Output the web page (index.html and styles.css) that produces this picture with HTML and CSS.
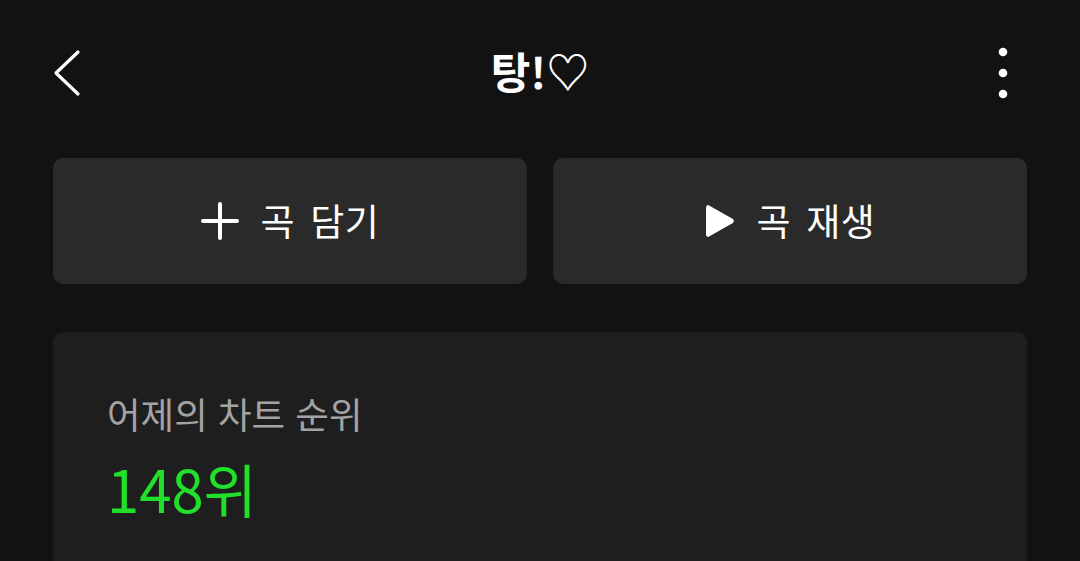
FILE: index.html
```html
<!DOCTYPE html>
<html lang="ko">
<head>
<meta charset="utf-8">
<title>탕!♡</title>
<link rel="stylesheet" href="styles.css">
</head>
<body>
<div class="screen">
  <header class="topbar">
    <button class="icon-btn back" aria-label="뒤로">
      <svg width="30" height="48" viewBox="0 0 30 48"><polyline points="25,3 3,24 25,45" fill="none" stroke="#fff" stroke-width="3.2" stroke-linecap="round" stroke-linejoin="round"/></svg>
    </button>
    <h1 class="title">탕!♡</h1>
    <button class="icon-btn more" aria-label="더보기">
      <svg width="12" height="54" viewBox="0 0 12 54"><circle cx="6" cy="6" r="4.3" fill="#fff"/><circle cx="6" cy="27" r="4.3" fill="#fff"/><circle cx="6" cy="48" r="4.3" fill="#fff"/></svg>
    </button>
  </header>

  <div class="actions">
    <button class="action">
      <svg class="action-icon" width="38" height="38" viewBox="0 0 38 38"><path d="M19 2v34M2 19h34" stroke="#fff" stroke-width="4" stroke-linecap="round"/></svg>
      <span>곡 담기</span>
    </button>
    <button class="action">
      <svg class="action-icon" width="30" height="36" viewBox="0 0 30 36"><path d="M4 3.5 Q2 2.3 2 4.8 V31.2 Q2 33.7 4 32.5 L27 19.4 Q28.6 18 27 16.6 Z" fill="#fff" stroke="#fff" stroke-width="2" stroke-linejoin="round"/></svg>
      <span>곡 재생</span>
    </button>
  </div>

  <section class="card">
    <p class="card-label">어제의 차트 순위</p>
    <p class="card-value">148위</p>
  </section>
</div>
</body>
</html>
```

FILE: styles.css
```css
html, body {
  margin: 0;
  padding: 0;
  background: #121212;
  overflow: hidden;
}

body {
  font-family: "Noto Sans CJK KR", "Noto Sans", Roboto, sans-serif;
  color: #fff;
}

.screen {
  width: 1080px;
  height: 561px;
  padding: 0 53px;
  box-sizing: border-box;
  overflow: hidden;
}

.topbar {
  height: 146px;
  display: flex;
  align-items: flex-start;
  justify-content: space-between;
  position: relative;
}

.icon-btn {
  background: none;
  border: 0;
  padding: 0;
  display: flex;
}

.back {
  margin-top: 49px;
}

.more {
  margin-top: 46px;
  margin-right: 18px;
}

.title {
  margin: 0;
  margin-top: 40px;
  font-size: 43px;
  font-weight: 700;
  line-height: 60px;
  letter-spacing: 0;
  position: absolute;
  left: 50%;
  transform: translateX(-50%);
}

.actions {
  margin-top: 12px;
  display: flex;
  gap: 26px;
}

.action {
  flex: 1;
  height: 126px;
  background: #2a2a2a;
  border: 0;
  border-radius: 10px;
  display: flex;
  align-items: center;
  justify-content: center;
  gap: 22px;
  color: #fff;
  font-family: inherit;
  font-size: 37px;
  font-weight: 400;
  letter-spacing: 0.6px;
  padding: 0;
}

.action span {
  line-height: 1;
  margin-top: -2px;
  word-spacing: 4px;
}

.card {
  margin-top: 48px;
  height: 240px;
  background: #1e1e1e;
  border-radius: 10px;
  padding: 54px 54px 0;
  box-sizing: border-box;
}

.card-label {
  margin: 0;
  font-size: 36.5px;
  line-height: 56px;
  color: #a3a3a3;
  letter-spacing: 0;
}

.card-value {
  margin: 10px 0 0;
  font-size: 58px;
  line-height: 72px;
  color: #20e02a;
  letter-spacing: 0;
}
```
